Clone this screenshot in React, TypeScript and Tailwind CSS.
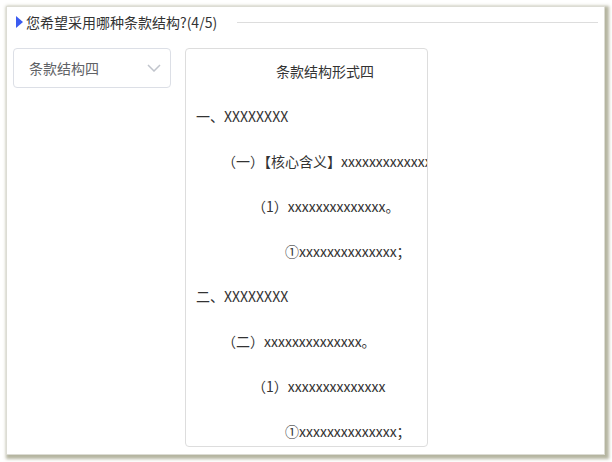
import React from 'react';

const lines = [
  { text: '一、XXXXXXXX', indent: 'pl-[10px]' },
  { text: '（一）【核心含义】xxxxxxxxxxxxxx', indent: 'pl-[36px]' },
  { text: '（1）xxxxxxxxxxxxxx。', indent: 'pl-[66px]' },
  { text: '①xxxxxxxxxxxxxx；', indent: 'pl-[99px]' },
  { text: '二、XXXXXXXX', indent: 'pl-[10px]' },
  { text: '（二）xxxxxxxxxxxxxx。', indent: 'pl-[36px]' },
  { text: '（1）xxxxxxxxxxxxxx', indent: 'pl-[66px]' },
  { text: '①xxxxxxxxxxxxxx；', indent: 'pl-[99px]' },
];

const App = () => {
  return (
    <div
      className="w-[612px] h-[462px] bg-white pt-[6px] pl-[6px] overflow-hidden"
      style={{ fontFamily: '"Microsoft YaHei", "Noto Sans CJK SC", sans-serif' }}
    >
      <div className="w-[599px] h-[449px] bg-white border border-[#dcdcd4] shadow-[2px_2px_3px_2px_rgba(150,150,120,0.7)] px-[6px] pt-[7px]">
        <div className="flex items-center h-[16px]">
          <div className="ml-[3px] w-0 h-0 border-y-[6px] border-y-transparent border-l-[7px] border-l-[#3b5bf0]" />
          <span className="ml-[3px] text-[14px] leading-none text-[#333]">您希望采用哪种条款结构?(4/5)</span>
          <div className="flex-1 ml-[20px] h-px bg-[#dddddd]" />
        </div>

        <div className="flex mt-[18px] gap-[14px]">
          <div className="w-[158px] h-[40px] border border-[#dcdfe6] rounded-[4px] flex items-center justify-between pl-[15px] pr-[9px]">
            <span className="text-[14px] text-[#606266]">条款结构四</span>
            <svg width="14" height="8" viewBox="0 0 14 8" fill="none">
              <polyline points="1,1 7,7 13,1" stroke="#c0c4cc" strokeWidth="1.5" />
            </svg>
          </div>

          <div className="w-[243px] h-[399px] border border-[#dddddd] rounded-[4px] overflow-hidden">
            <div className="pl-[90px] pt-[11px] h-[22px] box-content text-[14px] leading-[22px] text-[#333] whitespace-nowrap">
              条款结构形式四
            </div>
            {lines.map((l, i) => (
              <div
                key={i}
                className={`${l.indent} mt-[23px] h-[22px] text-[14px] leading-[22px] text-[#333] whitespace-nowrap`}
              >
                {l.text}
              </div>
            ))}
          </div>
        </div>
      </div>
    </div>
  );
};

export default App;
